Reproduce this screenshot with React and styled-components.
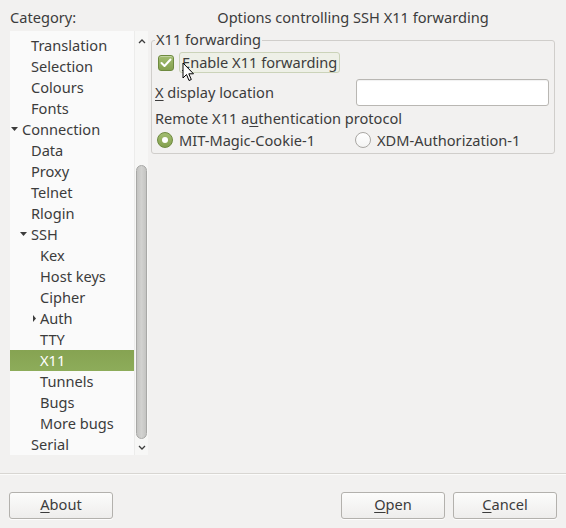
import React from "react";
import styled, { createGlobalStyle } from "styled-components";

const Global = createGlobalStyle`
  html, body { margin: 0; padding: 0; background: #f2f1f0; }
  body { font-family: "Noto Sans", "DejaVu Sans", sans-serif; font-size: 14.6px; color: #3c3c3c; }
  * { box-sizing: border-box; }
`;

const Window = styled.div`
  width: 566px;
  height: 528px;
  display: flex;
  flex-direction: column;
  background: #f2f1f0;
`;

const Top = styled.div`
  display: grid;
  grid-template-columns: 138px 1fr;
  grid-template-rows: 31px 424px;
  column-gap: 3px;
  padding: 0 11px 0 10px;
`;

const Heading = styled.div`
  padding-top: 8px;
  line-height: 18px;
  white-space: nowrap;
  text-align: ${(p) => (p.$center ? "center" : "left")};
`;

const TreeBox = styled.div`
  display: flex;
  background: #fafafa;
`;

const TreeList = styled.div`
  flex: 1;
  padding-top: 4px;
  overflow: hidden;
`;

const Row = styled.div`
  display: flex;
  align-items: center;
  height: 21px;
  padding-bottom: 2px;
  padding-left: ${(p) => p.$depth * 9}px;
  white-space: nowrap;
  color: ${(p) => (p.$selected ? "#ffffff" : "#3c3c3c")};
  background: ${(p) =>
    p.$selected ? "linear-gradient(#86a352, #8dac5a)" : "transparent"};
`;

const Expander = styled.span`
  width: 12px;
  height: 19px;
  display: flex;
  align-items: center;
  justify-content: ${(p) => (p.$dir === "right" ? "center" : "flex-start")};
  flex: none;
  padding-top: 1px;
`;

const Scrollbar = styled.div`
  width: 14px;
  display: flex;
  flex-direction: column;
  align-items: center;
  background: #f7f7f6;
  border-left: 1px solid #ececeb;
`;

const ScrollArrow = styled.div`
  height: 16px;
  display: flex;
  align-items: center;
  justify-content: center;
  flex: none;
  margin-top: ${(p) => (p.$top ? "2px" : "0")};
`;

const ScrollTrack = styled.div`
  flex: 1;
  width: 100%;
  display: flex;
  flex-direction: column;
  padding-top: 116px;
`;

const Thumb = styled.div`
  flex: 1;
  margin: 0 1px;
  border: 1px solid #a8a8a6;
  border-radius: 6px;
  background: linear-gradient(90deg, #c4c4c2, #d2d2d0 50%, #c4c4c2);
`;

const Fieldset = styled.fieldset`
  margin: 0;
  padding: 0 5px 5px 3px;
  border: 1px solid #d0cecb;
  border-radius: 3px;
  display: flex;
  flex-direction: column;
  align-self: start;
`;

const Legend = styled.legend`
  padding: 0 1px 1px;
  line-height: 17px;
  margin-left: 0;
`;

const CheckRow = styled.div`
  position: relative;
  display: flex;
  align-items: center;
  height: 21px;
  margin-top: 3px;
  padding-left: 3px;
  gap: 5px;
`;

const CheckBox = styled.span`
  width: 16px;
  height: 16px;
  border-radius: 3px;
  border: 1px solid #6e8a3f;
  background: linear-gradient(#a2bd70, #84a04e);
  display: flex;
  align-items: center;
  justify-content: center;
  box-shadow: inset 0 1px 0 rgba(255, 255, 255, 0.35);
`;

const FocusLabel = styled.span`
  height: 21px;
  display: flex;
  align-items: center;
  padding: 0 2px 1px;
  border: 1px solid #cbd3b9;
  border-radius: 3px;
  background: #eef0e7;
  white-space: nowrap;
`;

const Cursor = styled.svg`
  position: absolute;
  left: 27px;
  top: 10px;
`;

const PairRow = styled.div`
  display: grid;
  grid-template-columns: 200px 1fr;
  align-items: center;
  margin-top: ${(p) => p.$mt}px;
  height: ${(p) => p.$h}px;
`;

const TextInput = styled.div`
  height: 27px;
  margin-left: 1px;
  border: 1px solid #b9b7b3;
  border-radius: 3px;
  background: #ffffff;
  box-shadow: inset 0 1px 1px rgba(0, 0, 0, 0.06);
`;

const FieldLabel = styled.span`
  padding-bottom: 1px;
  white-space: nowrap;
`;

const PlainLine = styled.div`
  height: 18px;
  line-height: 17px;
  margin-top: 4px;
  white-space: nowrap;
`;

const Radio = styled.label`
  display: flex;
  align-items: center;
  gap: 6px;
  white-space: nowrap;
  padding-left: ${(p) => p.$pl || 0}px;
`;

const RadioDot = styled.span`
  width: 16px;
  height: 16px;
  border-radius: 50%;
  flex: none;
  display: flex;
  align-items: center;
  justify-content: center;
  border: 1px solid ${(p) => (p.$on ? "#6e8a3f" : "#a9a7a3")};
  background: ${(p) =>
    p.$on ? "linear-gradient(#a2bd70, #84a04e)" : "linear-gradient(#ffffff, #f4f4f3)"};
  &::after {
    content: "";
    display: ${(p) => (p.$on ? "block" : "none")};
    width: 6px;
    height: 6px;
    border-radius: 50%;
    background: #ffffff;
  }
`;

const U = styled.span`
  text-decoration: underline;
  text-underline-offset: 2px;
`;

const Separator = styled.div`
  margin-top: 18px;
  height: 1px;
  background: #d8d6d2;
  border-bottom: 1px solid #fbfbfa;
  box-sizing: content-box;
`;

const ButtonBar = styled.div`
  display: flex;
  justify-content: space-between;
  padding: 0 9px;
  margin-top: 17px;
`;

const ButtonGroup = styled.div`
  display: flex;
  gap: 8px;
`;

const Button = styled.button`
  width: 104px;
  height: 27px;
  border: 1px solid #b3b1ad;
  border-radius: 3px;
  background: linear-gradient(#fcfcfb, #eeedec);
  font-family: inherit;
  font-size: 14.6px;
  color: #3c3c3c;
  padding: 0 0 3px;
  box-shadow: 0 1px 0 rgba(255, 255, 255, 0.8);
`;

const tree = [
  { label: "Translation", depth: 1 },
  { label: "Selection", depth: 1 },
  { label: "Colours", depth: 1 },
  { label: "Fonts", depth: 1 },
  { label: "Connection", depth: 0, arrow: "down" },
  { label: "Data", depth: 1 },
  { label: "Proxy", depth: 1 },
  { label: "Telnet", depth: 1 },
  { label: "Rlogin", depth: 1 },
  { label: "SSH", depth: 1, arrow: "down" },
  { label: "Kex", depth: 2 },
  { label: "Host keys", depth: 2 },
  { label: "Cipher", depth: 2 },
  { label: "Auth", depth: 2, arrow: "right" },
  { label: "TTY", depth: 2 },
  { label: "X11", depth: 2, selected: true },
  { label: "Tunnels", depth: 2 },
  { label: "Bugs", depth: 2 },
  { label: "More bugs", depth: 2 },
  { label: "Serial", depth: 1 },
];

function Arrow({ dir }) {
  if (dir === "down")
    return (
      <svg width="9" height="6" viewBox="0 0 9 6">
        <path d="M1 1 L8 1 L4.5 5 Z" fill="#3c3c3c" />
      </svg>
    );
  if (dir === "right")
    return (
      <svg width="5" height="9" viewBox="0 0 5 9">
        <path d="M1 1 L4 4.5 L1 8 Z" fill="#3c3c3c" />
      </svg>
    );
  return null;
}

export default function App() {
  return (
    <Window>
      <Global />
      <Top>
        <Heading>Category:</Heading>
        <Heading $center>Options controlling SSH X11 forwarding</Heading>
        <TreeBox>
          <TreeList>
            {tree.map((t) => (
              <Row key={t.label} $depth={t.depth} $selected={t.selected}>
                <Expander $dir={t.arrow}>
                  <Arrow dir={t.arrow} />
                </Expander>
                {t.label}
              </Row>
            ))}
          </TreeList>
          <Scrollbar>
            <ScrollArrow $top>
              <svg width="8" height="5" viewBox="0 0 8 5">
                <path d="M1 4 L4 1 L7 4" stroke="#3c3c3c" strokeWidth="1.3" fill="none" />
              </svg>
            </ScrollArrow>
            <ScrollTrack>
              <Thumb />
            </ScrollTrack>
            <ScrollArrow>
              <svg width="8" height="5" viewBox="0 0 8 5">
                <path d="M1 1 L4 4 L7 1" stroke="#3c3c3c" strokeWidth="1.3" fill="none" />
              </svg>
            </ScrollArrow>
          </Scrollbar>
        </TreeBox>
        <Fieldset>
          <Legend>X11 forwarding</Legend>
          <CheckRow>
            <CheckBox>
              <svg width="12" height="10" viewBox="0 0 12 10">
                <path d="M1.5 5 L4.5 8 L10.5 1.5" stroke="#ffffff" strokeWidth="2" fill="none" strokeLinecap="round" strokeLinejoin="round" />
              </svg>
            </CheckBox>
            <FocusLabel>
              <U>E</U>nable X11 forwarding
            </FocusLabel>
            <Cursor width="13" height="21" viewBox="0 0 13 21">
              <path d="M1 1 L1 16 L4.5 12.5 L7 18.5 L9.3 17.5 L6.8 11.8 L11.5 11.8 Z" fill="#ffffff" stroke="#000000" strokeWidth="1" strokeLinejoin="round" />
            </Cursor>
          </CheckRow>
          <PairRow $mt={6} $h={27}>
            <FieldLabel>
              <U>X</U> display location
            </FieldLabel>
            <TextInput />
          </PairRow>
          <PlainLine>
            Remote X11 a<U>u</U>thentication protocol
          </PlainLine>
          <PairRow $mt={2} $h={18}>
            <Radio $pl={2}>
              <RadioDot $on />
              MIT-Magic-Cookie-1
            </Radio>
            <Radio>
              <RadioDot />
              XDM-Authorization-1
            </Radio>
          </PairRow>
        </Fieldset>
      </Top>
      <Separator />
      <ButtonBar>
        <Button>
          <U>A</U>bout
        </Button>
        <ButtonGroup>
          <Button>
            <U>O</U>pen
          </Button>
          <Button>
            <U>C</U>ancel
          </Button>
        </ButtonGroup>
      </ButtonBar>
    </Window>
  );
}
